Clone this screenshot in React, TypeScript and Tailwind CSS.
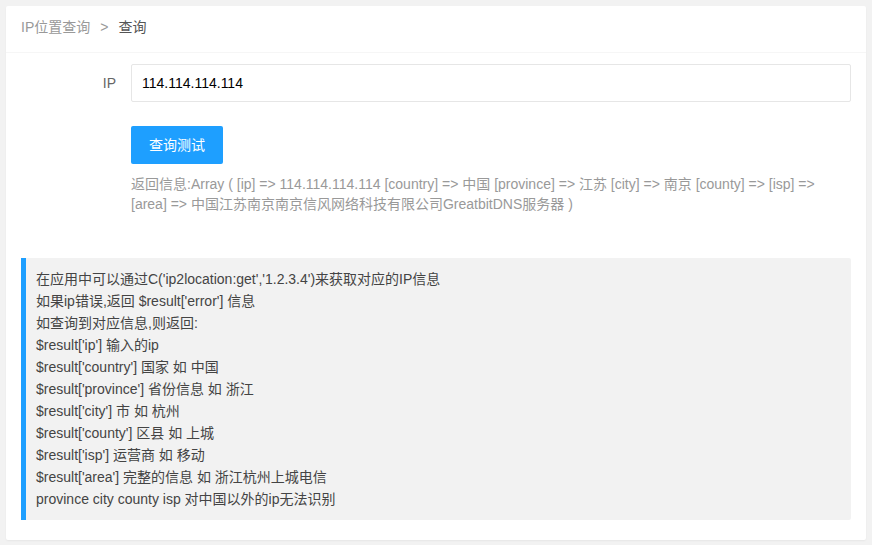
const lines = [
  "在应用中可以通过C('ip2location:get','1.2.3.4')来获取对应的IP信息",
  "如果ip错误,返回 $result['error'] 信息",
  "如查询到对应信息,则返回:",
  "$result['ip'] 输入的ip",
  "$result['country'] 国家 如 中国",
  "$result['province'] 省份信息 如 浙江",
  "$result['city'] 市 如 杭州",
  "$result['county'] 区县 如 上城",
  "$result['isp'] 运营商 如 移动",
  "$result['area'] 完整的信息 如 浙江杭州上城电信",
  "province city county isp 对中国以外的ip无法识别",
];

export default function App() {
  return (
    <div
      className="min-h-[545px] bg-[#f2f2f2] p-[6px] text-[14px] text-[#333]"
      style={{ fontFamily: '"Liberation Sans", "Noto Sans CJK SC", sans-serif' }}
    >
      <div className="rounded-[2px] bg-white shadow-[0_1px_2px_0_rgba(0,0,0,0.05)]">
        {/* Breadcrumb */}
        <div className="flex h-[47px] items-center border-b border-[#f6f6f6] px-[15px] pb-[3px]">
          <span className="text-[#999]">IP位置查询</span>
          <span className="mx-[10px] text-[#999]">&gt;</span>
          <span className="text-[#555]">查询</span>
        </div>

        <div className="px-[15px] pt-[11px] pb-[20px]">
          {/* IP input */}
          <div className="flex items-center">
            <label className="w-[110px] pr-[15px] text-right text-[#666]">IP</label>
            <input
              type="text"
              defaultValue="114.114.114.114"
              className="h-[38px] flex-1 rounded-[2px] border border-[#e6e6e6] bg-white pl-[10px] text-[#000] outline-none"
            />
          </div>

          {/* Button + result */}
          <div className="ml-[110px] mt-[24px]">
            <button className="h-[38px] rounded-[2px] bg-[#1E9FFF] px-[18px] text-white">
              查询测试
            </button>
            <div className="mt-[10px] leading-[20px] text-[#999]">
              返回信息:Array ( [ip] =&gt; 114.114.114.114 [country] =&gt; 中国 [province] =&gt; 江苏 [city] =&gt; 南京 [county] =&gt; [isp] =&gt; [area] =&gt; 中国江苏南京南京信风网络科技有限公司GreatbitDNS服务器 )
            </div>
          </div>

          {/* Notes */}
          <div className="mt-[44px] rounded-r-[2px] border-l-[5px] border-[#1E9FFF] bg-[#f2f2f2] py-[10px] pl-[10px] pr-[15px] leading-[22px] text-[#444]">
            {lines.map((l) => (
              <div key={l}>{l}</div>
            ))}
          </div>
        </div>
      </div>
    </div>
  );
}
